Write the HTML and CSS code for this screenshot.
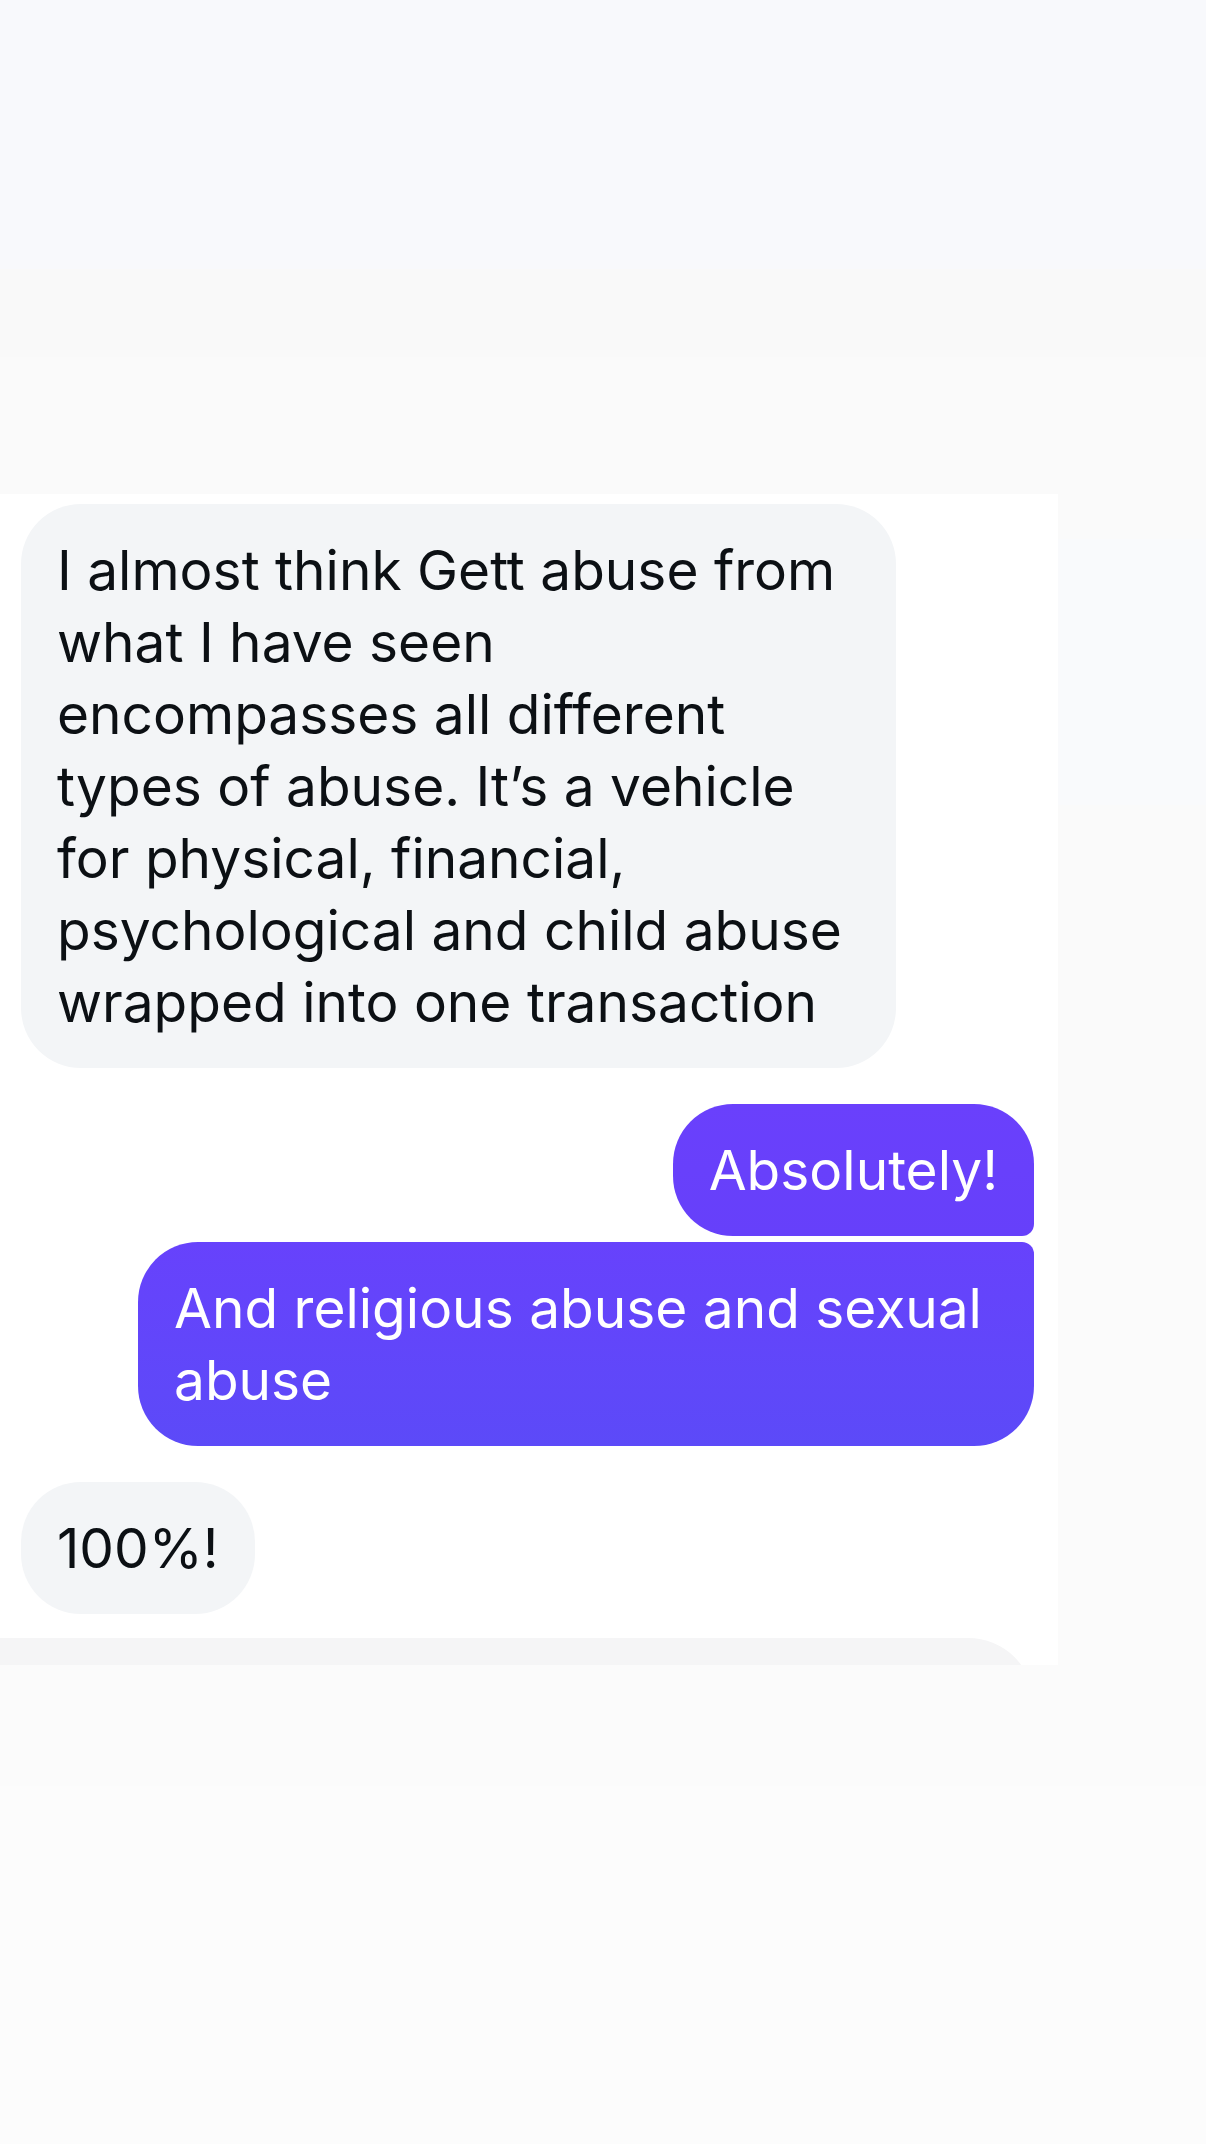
FILE: index.html
```html
<!DOCTYPE html>
<html lang="en">
<head>
    <meta charset="UTF-8">
    <meta name="viewport" content="width=device-width, initial-scale=1.0">
    <title>Messages</title>
    <link rel="stylesheet" href="styles.css">
</head>
<body>
    <main class="chat">
        <div class="message received">I almost think Gett abuse from what I have seen encompasses all different types of abuse. It’s a vehicle for physical, financial, psychological and child abuse wrapped into one transaction</div>
        <div class="sent-group">
            <div class="message sent sent-first">Absolutely!</div>
            <div class="message sent sent-last">And religious abuse and sexual abuse</div>
        </div>
        <div class="message received">100%!</div>
        <!-- top edge of the next message -->
        <div class="next-message"></div>
    </main>
</body>
</html>
```

FILE: styles.css
```css
* {
    margin: 0;
    padding: 0;
    box-sizing: border-box;
}
body {
    font-family: Inter, 'Liberation Sans', sans-serif;
    min-height: 100vh;
    padding-top: 494px;
    background: linear-gradient(
        #f8f9fc 0, #f8f9fc 269px,
        #f9f9f9 269px, #f9f9f9 357px,
        #fafafa 357px, #fafafa 539px,
        #f9fafc 539px, #f9fafc 805px,
        #fafafa 805px, #fafafa 1200px,
        #fbfbfb 1200px, #fbfbfb 1786px,
        #fcfcfc 1786px
    );
}
.chat {
    display: flex;
    flex-direction: column;
    gap: 36px;
    margin-right: 148px;
    padding: 10px 24px 0 21px;
    background: #fff;
    overflow: hidden;
}
.message {
    padding: 30px 36px;
    border-radius: 60px;
    font-size: 55px;
    line-height: 72px;
}
.received {
    align-self: flex-start;
    max-width: calc(100% - 138px);
    background: #f3f5f7;
    color: #0c1014;
}
.sent-group {
    display: flex;
    flex-direction: column;
    align-items: flex-end;
    gap: 6px;
}
.sent {
    color: #fff;
}
.sent-first {
    background: linear-gradient(#6a40fc, #6640fa);
    border-bottom-right-radius: 12px;
}
.sent-last {
    max-width: calc(100% - 117px);
    background: linear-gradient(#6742fc, #5c4af8);
    border-top-right-radius: 12px;
}
.next-message {
    height: 132px;
    margin: -12px 0 -105px -21px;
    background: #f5f5f6;
    border-radius: 0 66px 66px 0;
}
```
